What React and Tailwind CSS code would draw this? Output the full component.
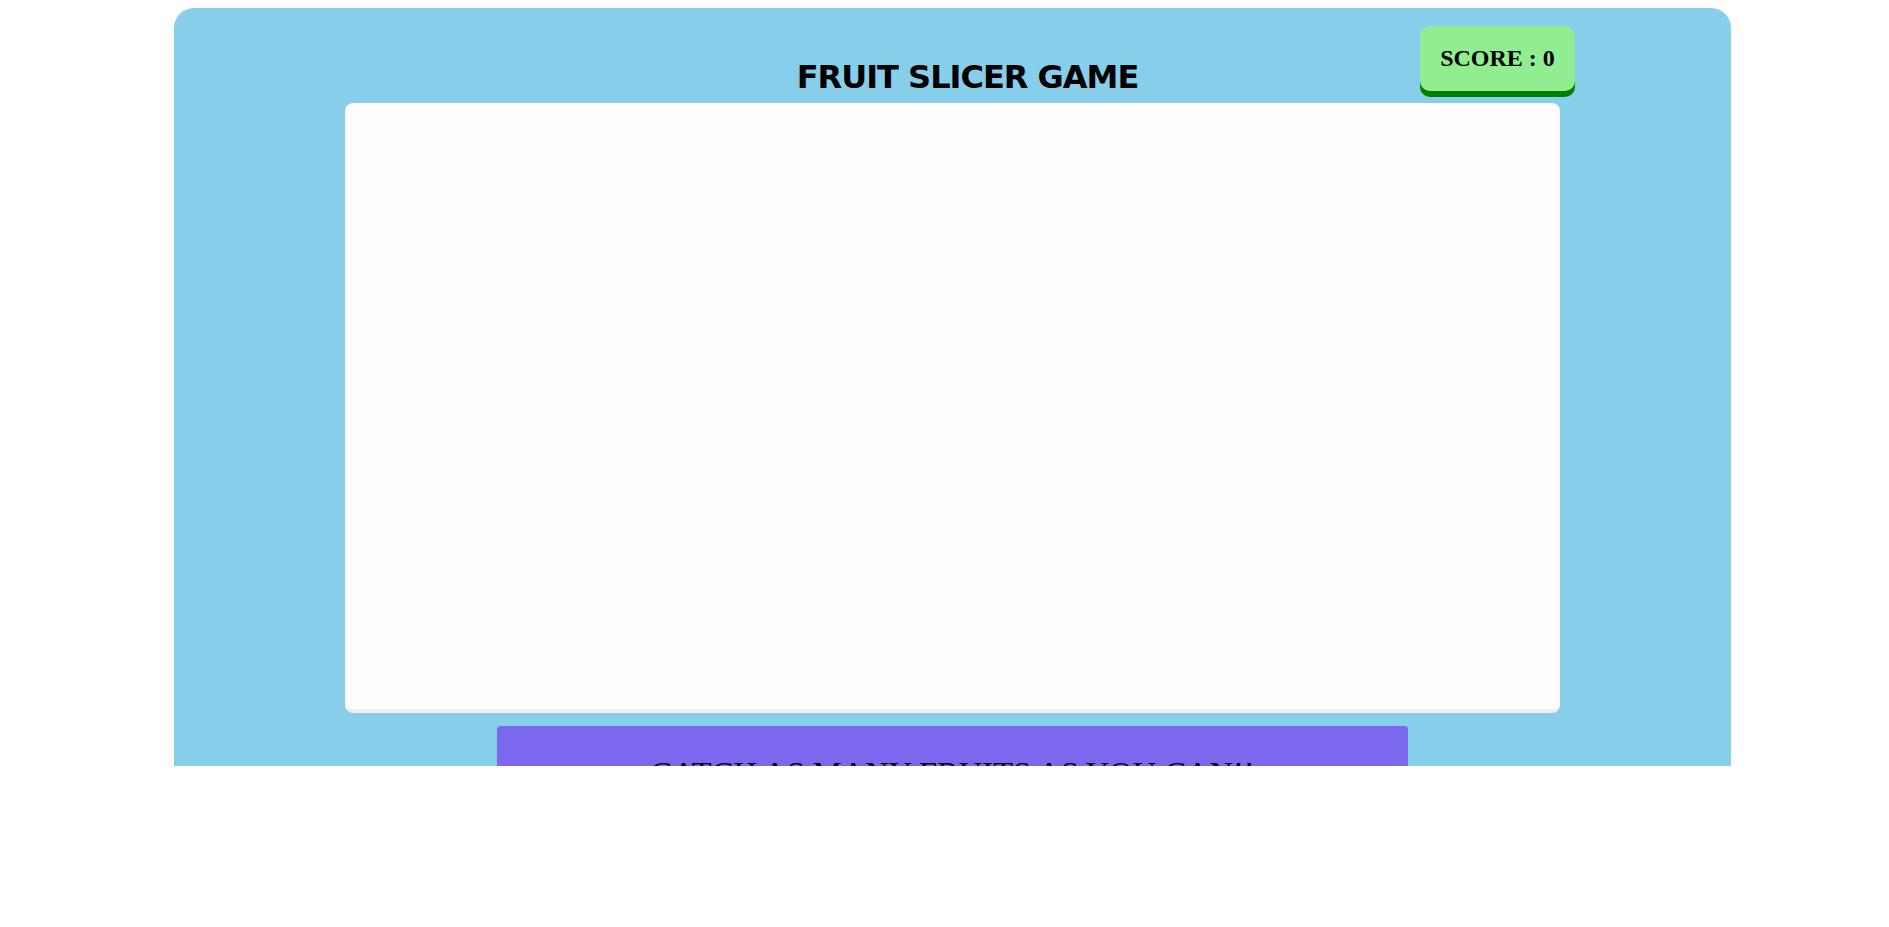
export default function App() {
  return (
    <div className="w-full h-[927px] bg-white overflow-hidden">
      <div className="h-[766px] overflow-hidden pt-[8px]">
        <div className="relative ml-[174px] w-[1557px] h-[900px] bg-[#87CEEB] rounded-t-[20px] pt-[50px]">
          <h1
            className="text-center pl-[30px] text-[32px] leading-[38px] font-bold text-black tracking-[-1px] mb-[7px]"
            style={{ fontFamily: '"Comic Sans MS", "DejaVu Sans", sans-serif' }}
          >
            FRUIT SLICER GAME
          </h1>
          <div className="absolute left-[1246px] top-[18px] w-[155px] h-[65px] rounded-[10px] bg-[#90EE90] shadow-[0_6px_0_#008000] flex items-center justify-center pb-[2px]">
            <span
              className="text-[24px] font-bold text-black"
              style={{ fontFamily: '"Liberation Serif", "Times New Roman", serif' }}
            >
              SCORE : 0
            </span>
          </div>
          <div className="mx-auto w-[1215px] h-[610px] bg-[#fefefe] rounded-[8px] border-b-4 border-[#f0f0f0]"></div>
          <div className="mx-auto mt-[13px] w-[911px] bg-[#7B68EE] rounded-t-[4px] pt-[29px] pb-[28px] text-center">
            <span
              className="text-[32.5px] leading-[37px] text-black"
              style={{ fontFamily: '"Liberation Serif", "Times New Roman", serif' }}
            >
              CATCH AS MANY FRUITS AS YOU CAN!!
            </span>
          </div>
        </div>
      </div>
    </div>
  );
}
